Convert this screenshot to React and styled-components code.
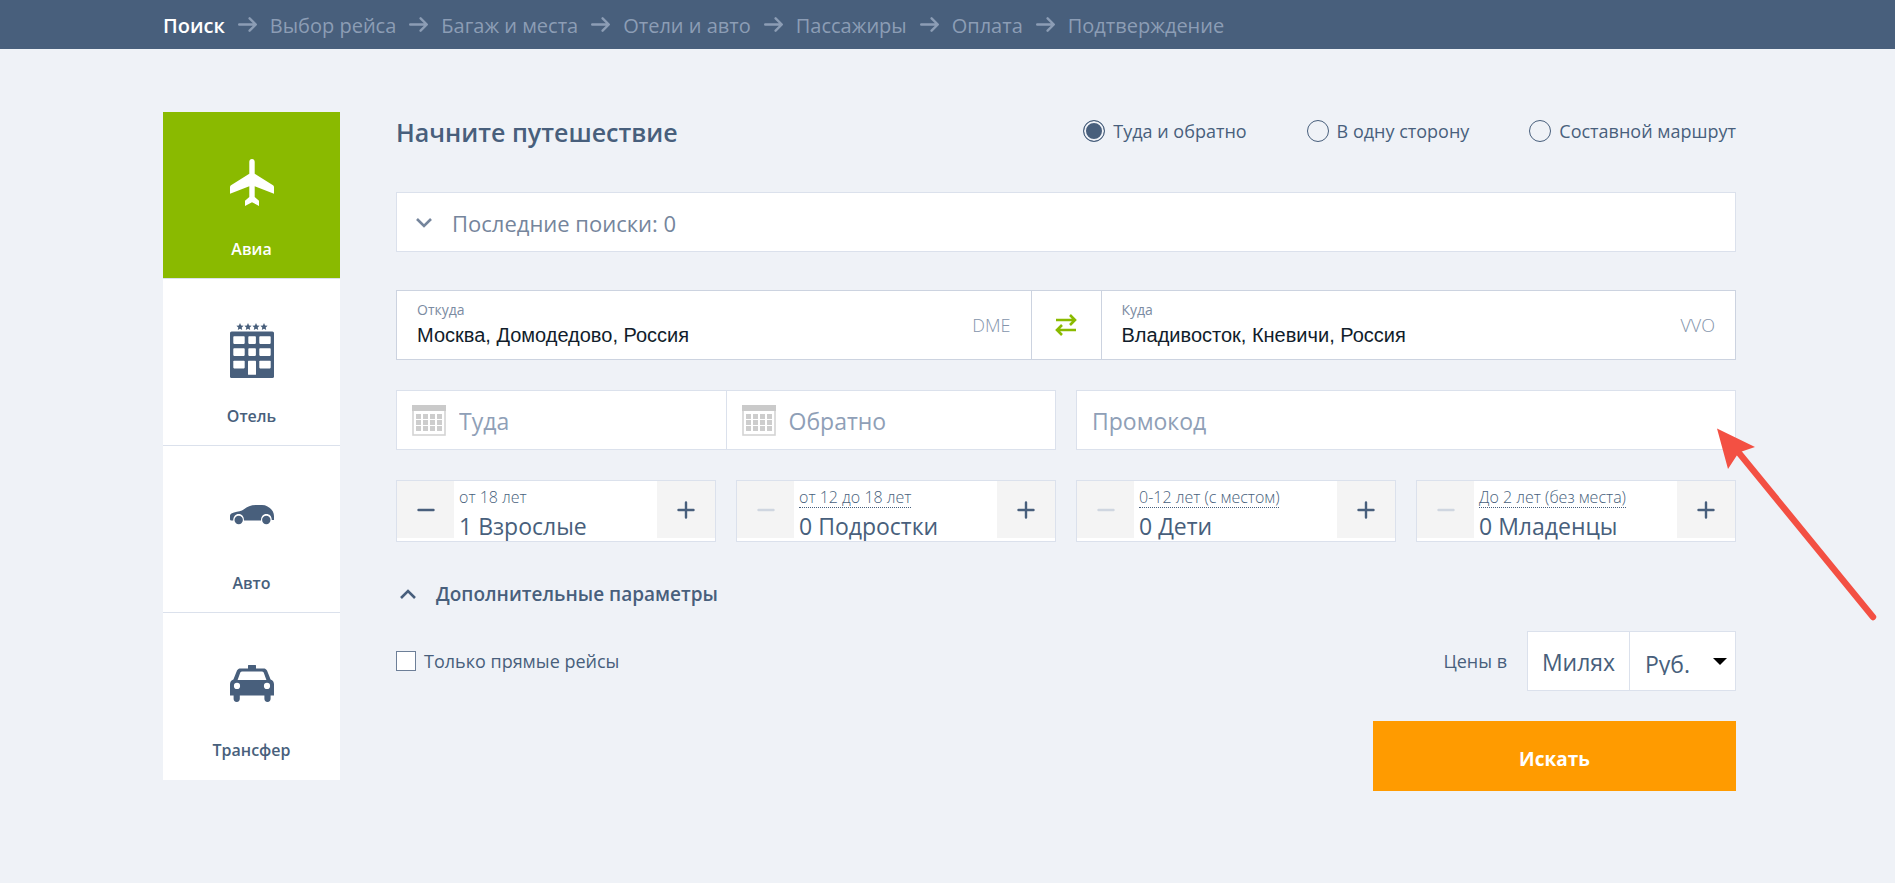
import React, { useState } from "react";
import styled, { createGlobalStyle, css } from "styled-components";

const c = {
  navy: "#485f7c",
  muted: "#8c9db5",
  page: "#eff2f7",
  line: "#dbe1ec",
  lineDark: "#ccd3e0",
  green: "#8aba00",
  orange: "#ff9b00",
  grey: "#f4f4f4",
};

const Global = createGlobalStyle`
  *, *::before, *::after { box-sizing: border-box; }
  body {
    margin: 0;
    background: ${c.page};
    color: ${c.navy};
    font-family: "Open Sans", "Noto Sans", sans-serif;
    font-size: 18px;
  }
  button, input, select { font: inherit; color: inherit; margin: 0; padding: 0; border: 0; border-radius: 0; background: none; outline: 0; }
  button, select { cursor: pointer; }
`;

const Steps = styled.nav`
  display: flex;
  align-items: center;
  gap: 13px;
  height: 49px;
  padding: 0 159px 0 163px;
  background: ${c.navy};
  color: ${c.muted};
`;
const Step = styled.a`
  font-size: 20px;
  line-height: 26px;
  padding-top: 2px;
  text-decoration: none;
  white-space: nowrap;
  color: ${(p) => (p.$active ? "#fff" : c.muted)};
  font-weight: ${(p) => (p.$active ? 600 : 400)};
`;
const Page = styled.div`
  display: flex;
  align-items: flex-start;
  gap: 56px;
  padding: 63px 159px 92px 163px;
`;
const Tabs = styled.nav`
  flex: none;
  width: 177px;
`;
const Tab = styled.a`
  display: flex;
  flex-direction: column;
  align-items: center;
  gap: 23px;
  height: 167px;
  padding-top: 42px;
  border-bottom: 1px solid ${c.line};
  &:last-child { border-bottom-color: #fff; }
  background: ${(p) => (p.$active ? c.green : "#fff")};
  color: ${(p) => (p.$active ? "#fff" : c.navy)};
  font-size: 16px;
  line-height: 24px;
  font-weight: 600;
  text-decoration: none;
`;
const Form = styled.form`
  flex: 1;
  min-width: 0;
`;
const Head = styled.header`
  display: flex;
  align-items: center;
  justify-content: space-between;
  height: 38px;
  margin-bottom: 42px;
`;
const Title = styled.h1`
  margin: 0;
  padding-top: 2px;
  font-size: 25px;
  line-height: 36px;
  font-weight: 600;
`;
const Radios = styled.div`
  display: flex;
  gap: 60px;
`;
const Check = styled.label`
  display: flex;
  align-items: center;
  gap: 8px;
  line-height: 24px;
  white-space: nowrap;
`;
const Radio = styled.input`
  appearance: none;
  width: 22px;
  height: 22px;
  border: 1px solid ${c.navy};
  border-radius: 50%;
  &:checked { background: ${c.navy}; box-shadow: inset 0 0 0 2px ${c.page}; }
`;
const Box = styled.input`
  appearance: none;
  width: 20px;
  height: 20px;
  border: 1px solid #6d7f98;
  background: #fff;
  &:checked { box-shadow: inset 0 0 0 3px #fff; background: ${c.navy}; }
`;
const panel = css`
  background: #fff;
  border: 1px solid ${c.line};
`;
const Recent = styled.button`
  ${panel}
  display: flex;
  align-items: center;
  gap: 20px;
  width: 100%;
  height: 60px;
  margin-bottom: 38px;
  padding: 2px 19px 0;
  color: #75859c;
  font-size: 22px;
`;
const Route = styled.div`
  ${panel}
  border-color: ${c.lineDark};
  display: flex;
  height: 70px;
  margin-bottom: 30px;
`;
const Place = styled.label`
  flex: 1;
  min-width: 0;
  display: grid;
  grid-template-columns: 1fr auto;
  grid-template-rows: 20px 28px;
  align-content: center;
  padding: 0 20px;
`;
const PlaceName = styled.span`
  color: #7b8ba2;
  font-size: 14px;
  line-height: 18px;
`;
const PlaceInput = styled.input`
  grid-row: 2;
  min-width: 0;
  color: #111d2b;
  font-family: "Liberation Sans", sans-serif;
  font-size: 20px;
`;
const Code = styled.span`
  grid-column: 2;
  grid-row: 1 / 3;
  align-self: center;
  color: #8494ab;
  font-size: 18px;
  font-weight: 300;
`;
const Swap = styled.button`
  display: grid;
  place-items: center;
  width: 71px;
  border: solid ${c.lineDark};
  border-width: 0 1px;
  color: ${c.green};
`;
const Row = styled.div`
  display: grid;
  grid-template-columns: repeat(${(p) => p.$cols}, minmax(0, 1fr));
  gap: 20px;
  margin-bottom: 30px;
`;
const Fields = styled.div`
  ${panel}
  position: relative;
  display: flex;
  height: 60px;
`;
const Field = styled.label`
  flex: 1;
  min-width: 0;
  display: flex;
  align-items: center;
  gap: 13px;
  padding: 0 15px;
  & + & { border-left: 1px solid ${c.line}; }
`;
const TextInput = styled.input`
  flex: 1;
  min-width: 0;
  padding-top: 2px;
  font-size: 23px;
  &::placeholder { color: #8f9fb7; opacity: 1; }
`;
const Pointer = styled.svg`
  position: absolute;
  z-index: 1;
  left: calc(100% - 18px);
  top: 37px;
  pointer-events: none;
`;
const Counter = styled.div`
  ${panel}
  display: flex;
  height: 62px;
`;
const Stepper = styled.button`
  display: grid;
  place-items: center;
  flex: none;
  width: 57px;
  height: 57px;
  background: ${c.grey};
  color: ${c.navy};
  &:last-child { width: 58px; }
  &:disabled { color: #cfd6e0; cursor: default; }
`;
const Count = styled.div`
  flex: 1;
  min-width: 0;
  padding: 7px 5px 0;
  white-space: nowrap;
`;
const Age = styled.span`
  display: block;
  width: fit-content;
  height: 20px;
  font-size: 16px;
  line-height: 18px;
  font-weight: 300;
  border-bottom: 1px ${(p) => (p.$hint ? "dotted" : "none")} ${c.navy};
`;
const Amount = styled.div`
  font-size: 23px;
  line-height: 36px;
`;
const More = styled.button`
  display: flex;
  align-items: center;
  gap: 20px;
  height: 44px;
  margin: 0 0 15px;
  padding-left: 4px;
  font-size: 19px;
  font-weight: 600;
`;
const Options = styled.div`
  display: flex;
  align-items: center;
  justify-content: space-between;
  margin-bottom: 30px;
`;
const Prices = styled.div`
  display: flex;
  align-items: center;
  gap: 20px;
`;
const Currency = styled.div`
  ${panel}
  position: relative;
  display: flex;
  align-items: flex-start;
  height: 60px;
  font-size: 23px;
  & > svg { position: absolute; right: 8px; top: 26px; pointer-events: none; }
`;
const Miles = styled.button`
  width: 102px;
  height: 58px;
  padding-top: 2px;
  border-right: 1px solid ${c.line};
`;
const Select = styled.select`
  appearance: none;
  width: 105px;
  height: 58px;
  padding: 16px 15px 15px;
`;
const Submit = styled.button`
  display: block;
  width: 363px;
  height: 70px;
  margin-left: auto;
  padding-top: 6px;
  background: ${c.orange};
  color: #fff;
  font-size: 19px;
  font-weight: 700;
`;

const StepArrow = () => (
  <svg width="19" height="16" viewBox="0 0 19 16" fill="none" stroke="currentColor" strokeWidth="2.4" strokeLinecap="round" strokeLinejoin="round" aria-hidden="true">
    <path d="M1.2 7.5H17.4M11.6 1.3L17.8 7.5L11.6 13.7" />
  </svg>
);
const Chevron = ({ up }) => (
  <svg width="16" height="10" viewBox="0 0 16 10" fill="none" stroke="currentColor" strokeWidth="2.6" aria-hidden="true">
    <path d={up ? "M1 9L8 2L15 9" : "M1 1L8 8L15 1"} />
  </svg>
);
const SwapIcon = () => (
  <svg width="22" height="22" viewBox="0 0 22 22" fill="none" stroke="currentColor" strokeWidth="2.6" aria-hidden="true">
    <path d="M1 6H20M15 1L20 6L15 11M21 16H2M7 11L2 16L7 21" />
  </svg>
);
const Calendar = () => (
  <svg width="34" height="31" viewBox="0 0 34 31" aria-hidden="true">
    <rect x="1" y="1" width="32" height="29" fill="#fff" stroke="#d4d4d4" strokeWidth="1.6" />
    <rect width="34" height="6" fill="#cacaca" />
    {[9, 15, 21].map((y) => [4, 11, 18, 25].map((x) => <rect key={x + "-" + y} x={x} y={y} width="5" height="5" fill="#cdcdcd" />))}
  </svg>
);
const Sign = ({ plus }) => (
  <svg width="18" height="18" viewBox="0 0 18 18" stroke="currentColor" strokeWidth="2.4" strokeLinecap="round" aria-hidden="true">
    <path d={plus ? "M1.5 9H16.5M9 1.5V16.5" : "M1.5 9H16.5"} />
  </svg>
);
const TabSvg = ({ children }) => (
  <svg width="44" height="60" viewBox="0 0 44 60" fill="currentColor" aria-hidden="true">{children}</svg>
);
const Plane = () => (
  <TabSvg>
    <path d="M22 5C23.6 5 24.7 6.2 24.7 7.8V19.8L43 31.3C43.7 31.8 44 32.4 44 33.2V39.7L24.7 32.2V43L29 46.8V52L22 48.2L15 52V46.8L19.3 43V32.2L0 39.7V33.2C0 32.4 .3 31.8 1 31.3L19.3 19.8V7.8C19.3 6.2 20.4 5 22 5Z" />
  </TabSvg>
);
const Hotel = () => (
  <TabSvg>
    {[10, 18, 26, 34].map((x) => (
      <path key={x} transform={`translate(${x} 5.6)`} d="M0 -3.6L1.1 -1.2L3.6 -.9L1.7 .8L2.2 3.4L0 2.1L-2.2 3.4L-1.7 .8L-3.6 -.9L-1.1 -1.2Z" />
    ))}
    <rect y="10.5" width="44" height="46.5" rx="1.6" />
    <g fill="#fff">
      {[15.3, 27.3, 39.8].map((y) => (
        <g key={y}>
          <rect x="3.3" y={y} width="11.4" height="7.6" rx=".8" />
          <rect x="29.3" y={y} width="11.4" height="7.6" rx=".8" />
        </g>
      ))}
      <rect x="18.3" y="15.3" width="7.6" height="7.6" rx=".8" />
      <rect x="18.3" y="27.3" width="7.6" height="7.6" rx=".8" />
      <rect x="18" y="39.8" width="8" height="14" rx=".6" />
    </g>
  </TabSvg>
);
const Car = () => (
  <TabSvg>
    <path d="M0 31.5V27.5C.5 25.6 2 25 4 24.5C8 23.4 11.5 23.2 14 21.2C17.5 18.4 21 17 27 17H32C38 17 44 22 44 28V32H41.8C41.6 28 39.6 26 36.3 26C33 26 31 28.5 31 32.6H14C14 28.5 12 26 8.7 26C5.4 26 3.4 28.4 3.2 32.6C1.6 32.6 .4 32.6 0 31.5Z" />
    <circle cx="8.7" cy="32" r="4.2" />
    <circle cx="36.3" cy="32" r="4.2" />
  </TabSvg>
);
const Taxi = () => (
  <TabSvg>
    <path fillRule="evenodd" d="M18.5 10H25.5Q26 10 26 10.5V13.4H33.5C35 13.4 36.3 14 37 15.5L40.6 24.4C42.8 25.4 44 26.8 44 29.2V40.4H40.6V43.8A3.1 3.1 0 0 1 34.4 43.8V40.4H9.8V43.8A3.1 3.1 0 0 1 3.6 43.8V40.4H0V29.2C0 26.8 1.2 25.4 3.4 24.4L7 15.5C7.7 14 9 13.4 10.5 13.4H18V10.5Q18 10 18.5 10ZM12.3 16.4Q10.8 16.4 10.3 17.6L7.6 25H36.4L33.7 17.6Q33.2 16.4 31.7 16.4ZM7 27.8A3.1 3.1 0 1 0 7 34A3.1 3.1 0 1 0 7 27.8ZM37 27.8A3.1 3.1 0 1 0 37 34A3.1 3.1 0 1 0 37 27.8Z" />
  </TabSvg>
);

const steps = ["Поиск", "Выбор рейса", "Багаж и места", "Отели и авто", "Пассажиры", "Оплата", "Подтверждение"];
const tabs = [["Авиа", Plane], ["Отель", Hotel], ["Авто", Car], ["Трансфер", Taxi]];
const trips = ["Туда и обратно", "В одну сторону", "Составной маршрут"];
const passengers = [
  { age: "от 18 лет", name: "Взрослые", start: 1 },
  { age: "от 12 до 18 лет", name: "Подростки", start: 0, hint: true },
  { age: "0-12 лет (с местом)", name: "Дети", start: 0, hint: true },
  { age: "До 2 лет (без места)", name: "Младенцы", start: 0, hint: true },
];

function PassengerCounter({ age, name, start, hint }) {
  const [n, setN] = useState(start);
  return (
    <Counter>
      <Stepper type="button" aria-label={`Меньше: ${name}`} disabled={n === 0} onClick={() => setN(n - 1)}><Sign /></Stepper>
      <Count>
        <Age $hint={hint}>{age}</Age>
        <Amount>{n} {name}</Amount>
      </Count>
      <Stepper type="button" aria-label={`Больше: ${name}`} onClick={() => setN(n + 1)}><Sign plus /></Stepper>
    </Counter>
  );
}

export default function App() {
  return (
    <>
      <Global />
      <Steps>
        {steps.map((s, i) => (
          <React.Fragment key={s}>
            {i > 0 && <StepArrow />}
            <Step href="#" $active={i === 0}>{s}</Step>
          </React.Fragment>
        ))}
      </Steps>
      <Page>
        <Tabs>
          {tabs.map(([label, Icon], i) => (
            <Tab key={label} href="#" $active={i === 0}><Icon />{label}</Tab>
          ))}
        </Tabs>
        <Form onSubmit={(e) => e.preventDefault()}>
          <Head>
            <Title>Начните путешествие</Title>
            <Radios>
              {trips.map((t, i) => (
                <Check key={t}><Radio type="radio" name="trip" defaultChecked={i === 0} />{t}</Check>
              ))}
            </Radios>
          </Head>
          <Recent type="button"><Chevron />Последние поиски: 0</Recent>
          <Route>
            <Place>
              <PlaceName>Откуда</PlaceName>
              <PlaceInput defaultValue="Москва, Домодедово, Россия" />
              <Code>DME</Code>
            </Place>
            <Swap type="button" aria-label="Поменять местами"><SwapIcon /></Swap>
            <Place>
              <PlaceName>Куда</PlaceName>
              <PlaceInput defaultValue="Владивосток, Кневичи, Россия" />
              <Code>VVO</Code>
            </Place>
          </Route>
          <Row $cols={2}>
            <Fields>
              <Field><Calendar /><TextInput placeholder="Туда" aria-label="Туда" /></Field>
              <Field><Calendar /><TextInput placeholder="Обратно" aria-label="Обратно" /></Field>
            </Fields>
            <Fields>
              <Field><TextInput placeholder="Промокод" aria-label="Промокод" /></Field>
              <Pointer width="162" height="195" viewBox="0 0 162 195" fill="#f35043" aria-hidden="true">
                <path d="M22 25L156 189" stroke="#f35043" strokeWidth="6.4" strokeLinecap="round" />
                <path d="M0 .5L38 19L24 23.8L19.8 27.6L11 41Z" />
              </Pointer>
            </Fields>
          </Row>
          <Row $cols={4}>
            {passengers.map((p) => <PassengerCounter key={p.name} {...p} />)}
          </Row>
          <More type="button"><Chevron up />Дополнительные параметры</More>
          <Options>
            <Check><Box type="checkbox" />Только прямые рейсы</Check>
            <Prices>
              <span>Цены в</span>
              <Currency>
                <Miles type="button">Милях</Miles>
                <Select aria-label="Валюта"><option>Руб.</option></Select>
                <svg width="14" height="7" viewBox="0 0 14 7" aria-hidden="true"><path d="M0 0H14L7 7Z" /></svg>
              </Currency>
            </Prices>
          </Options>
          <Submit type="submit">Искать</Submit>
        </Form>
      </Page>
    </>
  );
}
